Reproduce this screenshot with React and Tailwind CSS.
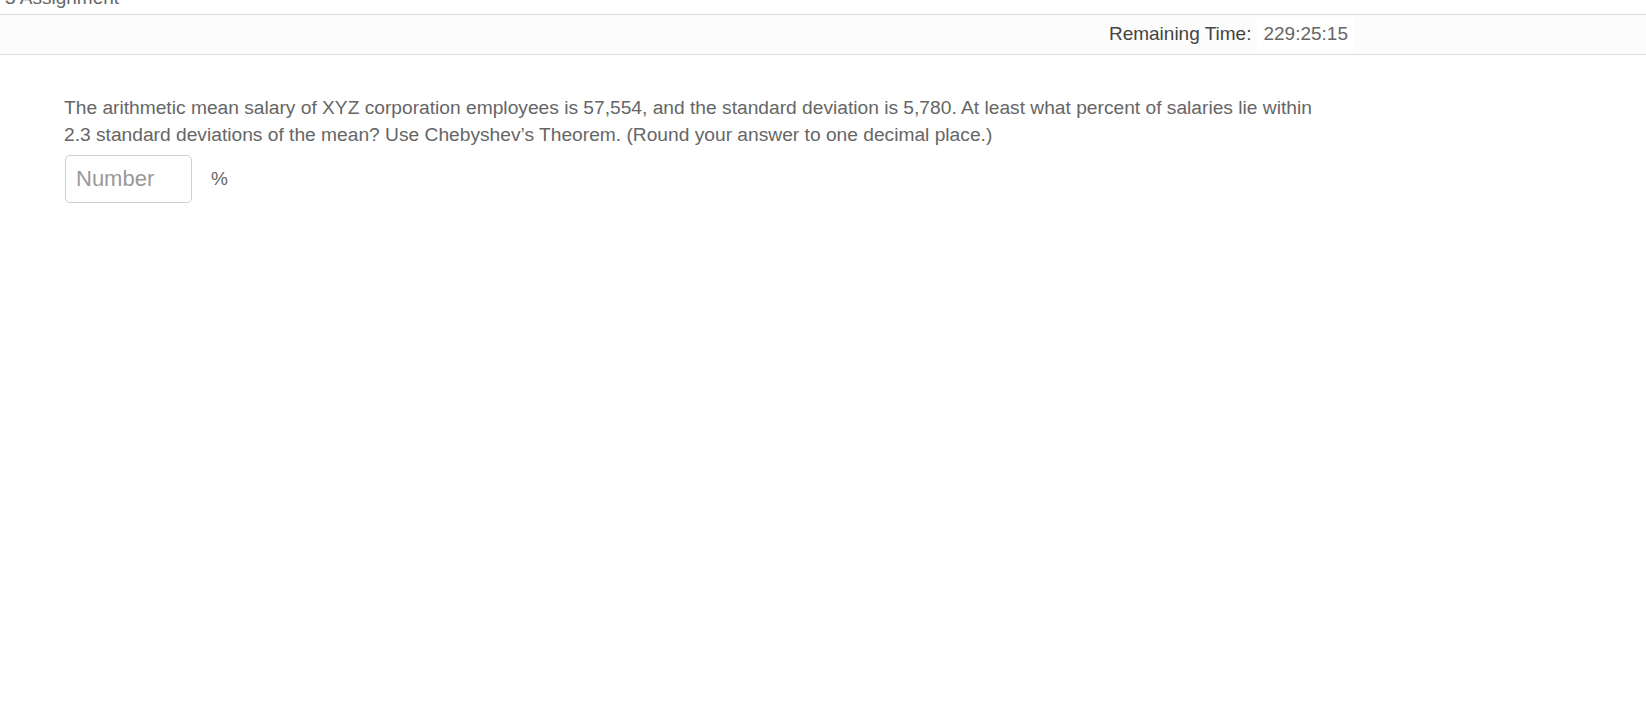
export default function App() {
  return (
    <div className="min-h-[707px] bg-white font-['Liberation_Sans',Arial,sans-serif]">
      <div className="h-[14px] overflow-hidden">
        <div className="-mt-[12px] ml-[5px] text-[19px] leading-[19px] text-[#666]">3 Assignment</div>
      </div>
      <div className="h-[41px] border-y border-[#dcdcdc] bg-[#fcfcfc] flex items-center">
        <div className="w-[1354px] flex justify-end items-center">
          <span className="text-[19px] text-[#444] mr-[6px]">Remaining Time:</span>
          <span className="bg-white px-[6px] py-[2px] text-[19px] text-[#666]">229:25:15</span>
        </div>
      </div>
      <div className="pl-[64px] pt-[39px]">
        <p className="w-[1275px] text-[19.2px] leading-[27px] text-[#666]">
          The arithmetic mean salary of XYZ corporation employees is 57,554, and the standard deviation is 5,780. At least what percent of salaries lie within 2.3 standard deviations of the mean? Use Chebyshev’s Theorem. (Round your answer to one decimal place.)
        </p>
        <div className="mt-[7px] flex items-center">
          <input
            type="text"
            placeholder="Number"
            className="ml-[1px] w-[127px] h-[48px] border border-[#cfcfcf] rounded-[5px] px-[10px] text-[22px] placeholder:text-[#999] outline-none"
          />
          <span className="ml-[19px] text-[19px] text-[#666]">%</span>
        </div>
      </div>
    </div>
  )
}
